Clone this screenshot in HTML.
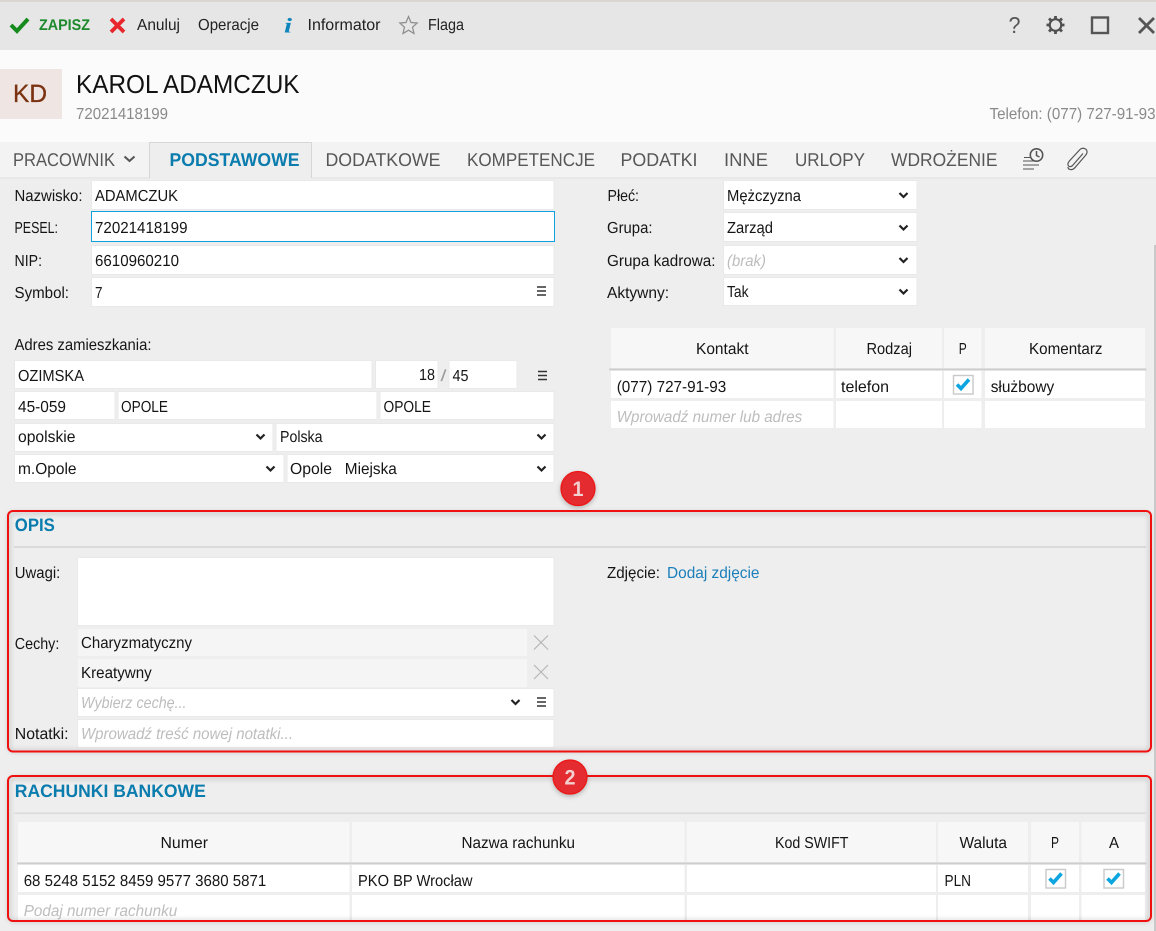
<!DOCTYPE html>
<html lang="pl">
<head>
<meta charset="utf-8">
<title>Karol Adamczuk</title>
<style>
html,body{margin:0;padding:0;background:#eee;overflow:hidden;width:1156px;height:931px}
svg{display:block}
text{font-family:"Liberation Sans",sans-serif;font-size:16px;fill:#151515;text-rendering:geometricPrecision}
.i{fill:#fff;stroke:#e9e9e9;stroke-width:1}
.h{fill:#f7f7f7}
.w{fill:#fff}
.ph{font-style:italic;fill:#bdbdbd}
.g{fill:#8a8a8a}
.t{font-size:18.5px;fill:#575757}
.s{font-size:18.5px;font-weight:bold;fill:#0a7cad}
.tb{fill:#222}
.c{fill:none;stroke:#222;stroke-width:2.2}
.m{stroke:#333;stroke-width:1.6}
.x{stroke:#b5b5b5;stroke-width:1.2}
.cb{fill:#fff;stroke:#c9c9c9;stroke-width:1.4}
.ck{fill:none;stroke:#0ca5df;stroke-width:3.6}
.f{fill:none;stroke:#f01010;stroke-width:2}
.fs{fill:none;stroke:#777;stroke-width:3;opacity:.32}
</style>
</head>
<body>
<svg xmlns="http://www.w3.org/2000/svg" width="1156" height="931" viewBox="0 0 1156 931">
<defs>
<filter id="b" x="-5%" y="-10%" width="110%" height="120%"><feGaussianBlur stdDeviation="2.5"/></filter>
<filter id="bs" x="-40%" y="-40%" width="180%" height="180%"><feGaussianBlur stdDeviation="2.5"/></filter>
<g id="chev"><path class="c" d="M-4-2L0 2L4-2"/></g>
<g id="menu"><path class="m" d="M-4.500-4H4.500M-4.500 0H4.500M-4.500 4H4.500"/></g>
<g id="xx"><path class="x" d="M-7-7L7 7M7-7L-7 7"/></g>
<g id="box"><rect class="cb" x="-9.500" y="-9" width="19.500" height="18.500"/><path class="ck" d="M-6 0L-2 4L6-5"/></g>
</defs>

<!-- page backgrounds -->
<rect width="1156" height="931" fill="#eee"/>
<rect width="1156" height="2" fill="#d9d5d1"/>
<rect y="2" width="1156" height="48" fill="#e6e6e6"/>
<rect y="50" width="1156" height="92" fill="#fbfbfb"/>
<rect y="142" width="1156" height="35" fill="#f3f3f3"/>
<rect y="177" width="1156" height="2" fill="#e8e8e8"/>
<rect x="1154" y="245" width="2" height="686" fill="#c9c9c9"/>

<!-- toolbar -->
<path d="M11 25L17 31L28 19" fill="none" stroke="#178a1e" stroke-width="4"/>
<text x="39" y="30" textLength="51" lengthAdjust="spacingAndGlyphs" font-weight="bold" style="font-size:15.5px;fill:#1c8a2c">ZAPISZ</text>
<path d="M111 19L124 32M124 19L111 32" stroke="#e8262c" stroke-width="3.800" fill="none"/>
<text class="tb" x="137" y="30" textLength="43" lengthAdjust="spacingAndGlyphs">Anuluj</text>
<text class="tb" x="198" y="30" textLength="61" lengthAdjust="spacingAndGlyphs">Operacje</text>
<text x="284" y="32.500" textLength="8" lengthAdjust="spacingAndGlyphs" font-weight="bold" font-style="italic" style="font-family:'Liberation Serif',serif;font-size:21px;fill:#0f85bd">i</text>
<text class="tb" x="307.500" y="30" textLength="73" lengthAdjust="spacingAndGlyphs">Informator</text>
<path d="M408.500 16.500L411 22.500L417.200 23L412.500 27.200L414 33.500L408.500 30.200L403 33.500L404.500 27.200L399.800 23L406 22.500Z" fill="none" stroke="#8c8c8c" stroke-width="1.200"/>
<text class="tb" x="428" y="30" textLength="36" lengthAdjust="spacingAndGlyphs">Flaga</text>

<text x="1008.500" y="33" textLength="12" lengthAdjust="spacingAndGlyphs" style="font-size:23px;fill:#555">?</text>
<g transform="translate(1055.500 25)" fill="none" stroke="#505050">
<circle r="5.800" stroke-width="2.200"/>
<path stroke-width="2.800" d="M0-9V-6.500M0 6.500V9M-9 0H-6.500M6.500 0H9M-6.500-6.500L-4.700-4.700M6.500-6.500L4.700-4.700M-6.500 6.500L-4.700 4.700M6.500 6.500L4.700 4.700"/>
</g>
<rect x="1092" y="17.500" width="16" height="15.500" fill="none" stroke="#555" stroke-width="2.400"/>
<path d="M1139 18L1154 33M1154 18L1139 33" fill="none" stroke="#555" stroke-width="2.800"/>

<!-- header -->
<rect y="69" width="62" height="50" fill="#efe6e4"/>
<text x="13" y="102" textLength="34" lengthAdjust="spacingAndGlyphs" style="font-size:25px;fill:#7b3312;stroke:#7b3312;stroke-width:.3">KD</text>
<text x="76" y="93" textLength="223.500" lengthAdjust="spacingAndGlyphs" style="font-size:26px;fill:#111">KAROL ADAMCZUK</text>
<text class="g" x="76" y="119" textLength="92" lengthAdjust="spacingAndGlyphs">72021418199</text>
<text class="g" x="989.500" y="119" textLength="166" lengthAdjust="spacingAndGlyphs">Telefon: (077) 727-91-93</text>

<!-- tabs -->
<rect x="150" y="142" width="162" height="37" fill="#eee"/>
<path d="M149.500 178V142.500H311.500V178" fill="none" stroke="#d6d6d6"/>
<text class="t" x="13" y="166" textLength="102" lengthAdjust="spacingAndGlyphs">PRACOWNIK</text>
<path d="M124.500 156.500L129.500 161L134.500 156.500" fill="none" stroke="#555" stroke-width="2"/>
<text class="s" x="169.500" y="166" textLength="130" lengthAdjust="spacingAndGlyphs">PODSTAWOWE</text>
<text class="t" x="325.500" y="166" textLength="115" lengthAdjust="spacingAndGlyphs">DODATKOWE</text>
<text class="t" x="467" y="166" textLength="128" lengthAdjust="spacingAndGlyphs">KOMPETENCJE</text>
<text class="t" x="620.500" y="166" textLength="77" lengthAdjust="spacingAndGlyphs">PODATKI</text>
<text class="t" x="724" y="166" textLength="44" lengthAdjust="spacingAndGlyphs">INNE</text>
<text class="t" x="795" y="166" textLength="70" lengthAdjust="spacingAndGlyphs">URLOPY</text>
<text class="t" x="891" y="166" textLength="106.500" lengthAdjust="spacingAndGlyphs">WDROŻENIE</text>
<g fill="none" stroke="#555">
<path stroke-width="1.100" d="M1024 157.500H1030M1023 161H1039M1023 165H1039M1023 169H1034"/>
<circle cx="1036.500" cy="155" r="6.200" stroke-width="1.600"/>
<path stroke-width="1.500" d="M1036.500 151V155.500L1039.500 157"/>
<path stroke-width="1.200" d="M1083 153.500L1073 165C1070.500 168 1067.500 166.500 1068 163.500C1068.200 162.500 1069 161.500 1069.800 160.500L1080 149.500C1082.500 147 1087.500 148.500 1087 152.500C1086.800 153.800 1086 155 1085 156L1075.500 167C1073 170.500 1068.500 170.500 1067.800 167"/>
</g>

<!-- left form -->
<text x="14.500" y="201" textLength="68" lengthAdjust="spacingAndGlyphs">Nazwisko:</text>
<text x="14.500" y="233" textLength="43.500" lengthAdjust="spacingAndGlyphs">PESEL:</text>
<text x="14.500" y="266" textLength="27.500" lengthAdjust="spacingAndGlyphs">NIP:</text>
<text x="14.500" y="298" textLength="54.500" lengthAdjust="spacingAndGlyphs">Symbol:</text>
<rect class="i" x="91.500" y="180.500" width="462.500" height="29"/>
<rect x="91.500" y="211.500" width="463" height="30" fill="#fff" stroke="#12a0dc"/>
<rect class="i" x="91.500" y="245.500" width="462.500" height="29"/>
<rect class="i" x="91.500" y="277.500" width="462.500" height="29"/>
<text x="95" y="201" textLength="83" lengthAdjust="spacingAndGlyphs">ADAMCZUK</text>
<text x="95" y="233" textLength="92.500" lengthAdjust="spacingAndGlyphs">72021418199</text>
<text x="95" y="266" textLength="84" lengthAdjust="spacingAndGlyphs">6610960210</text>
<text x="95" y="298" textLength="7.500" lengthAdjust="spacingAndGlyphs">7</text>
<use href="#menu" x="541.500" y="291"/>

<text x="14.500" y="350" textLength="137" lengthAdjust="spacingAndGlyphs">Adres zamieszkania:</text>
<rect class="i" x="14.500" y="360.500" width="357.500" height="28"/>
<rect class="i" x="375.500" y="360.500" width="62.500" height="28"/>
<rect class="i" x="449" y="360.500" width="68" height="28"/>
<text x="18" y="381" textLength="66" lengthAdjust="spacingAndGlyphs">OZIMSKA</text>
<text x="419" y="380" textLength="16" lengthAdjust="spacingAndGlyphs">18</text>
<text x="440.500" y="381" textLength="6" lengthAdjust="spacingAndGlyphs" style="fill:#999">/</text>
<text x="452.500" y="381" textLength="16" lengthAdjust="spacingAndGlyphs">45</text>
<use href="#menu" x="542.500" y="375.500"/>
<rect class="i" x="14.500" y="391.500" width="100.500" height="28"/>
<rect class="i" x="118" y="391.500" width="259" height="28"/>
<rect class="i" x="380" y="391.500" width="174" height="28"/>
<text x="18" y="412" textLength="48" lengthAdjust="spacingAndGlyphs">45-059</text>
<text x="121" y="412" textLength="47" lengthAdjust="spacingAndGlyphs">OPOLE</text>
<text x="383.500" y="412" textLength="47.500" lengthAdjust="spacingAndGlyphs">OPOLE</text>
<rect class="i" x="14.500" y="423.500" width="258.500" height="28"/>
<rect class="i" x="276" y="423.500" width="278" height="28"/>
<text x="18" y="442" textLength="57.500" lengthAdjust="spacingAndGlyphs">opolskie</text>
<text x="280" y="442" textLength="42.500" lengthAdjust="spacingAndGlyphs">Polska</text>
<use href="#chev" x="260.500" y="436.500"/>
<use href="#chev" x="541.500" y="436.500"/>
<rect class="i" x="14.500" y="454.500" width="269.500" height="28"/>
<rect class="i" x="287" y="454.500" width="267" height="28"/>
<text x="18" y="474" textLength="58.500" lengthAdjust="spacingAndGlyphs">m.Opole</text>
<text x="290" y="474" textLength="42" lengthAdjust="spacingAndGlyphs">Opole</text>
<text x="344.800" y="474" textLength="52" lengthAdjust="spacingAndGlyphs">Miejska</text>
<use href="#chev" x="270.500" y="468.500"/>
<use href="#chev" x="541.500" y="468.500"/>

<!-- right form -->
<text x="607.500" y="201" textLength="31.500" lengthAdjust="spacingAndGlyphs">Płeć:</text>
<text x="607" y="233" textLength="45.500" lengthAdjust="spacingAndGlyphs">Grupa:</text>
<text x="607" y="266" textLength="108.500" lengthAdjust="spacingAndGlyphs">Grupa kadrowa:</text>
<text x="607" y="298" textLength="62" lengthAdjust="spacingAndGlyphs">Aktywny:</text>
<rect class="i" x="723.500" y="180.500" width="193.500" height="29"/>
<rect class="i" x="723.500" y="212.500" width="193.500" height="29"/>
<rect class="i" x="723.500" y="245.500" width="193.500" height="29"/>
<rect class="i" x="723.500" y="277.500" width="193.500" height="28"/>
<text x="727" y="201" textLength="74" lengthAdjust="spacingAndGlyphs">Mężczyzna</text>
<text x="727" y="233" textLength="46" lengthAdjust="spacingAndGlyphs">Zarząd</text>
<text class="ph" x="727" y="266" textLength="39" lengthAdjust="spacingAndGlyphs">(brak)</text>
<text x="727" y="297" textLength="21.500" lengthAdjust="spacingAndGlyphs">Tak</text>
<use href="#chev" x="903.500" y="195"/>
<use href="#chev" x="903.500" y="227.500"/>
<use href="#chev" x="903.500" y="260"/>
<use href="#chev" x="903.500" y="291.500"/>

<!-- contacts table -->
<rect class="h" x="611" y="328" width="222.500" height="40"/>
<rect class="h" x="836" y="328" width="106" height="40"/>
<rect class="h" x="944" y="328" width="37.500" height="40"/>
<rect class="h" x="985" y="328" width="160" height="40"/>
<rect x="609" y="368.500" width="537.500" height="1.800" fill="#cdcdcd"/>
<rect class="w" x="611" y="371" width="222.500" height="27"/>
<rect class="w" x="836" y="371" width="106" height="27"/>
<rect class="w" x="944" y="371" width="37.500" height="27"/>
<rect class="w" x="985" y="371" width="160" height="27"/>
<rect class="w" x="611" y="401" width="222.500" height="27"/>
<rect class="w" x="836" y="401" width="106" height="27"/>
<rect class="w" x="944" y="401" width="37.500" height="27"/>
<rect class="w" x="985" y="401" width="160" height="27"/>
<text x="696" y="354" textLength="52.500" lengthAdjust="spacingAndGlyphs">Kontakt</text>
<text x="866.500" y="354" textLength="45.500" lengthAdjust="spacingAndGlyphs">Rodzaj</text>
<text x="958.800" y="354" textLength="8" lengthAdjust="spacingAndGlyphs">P</text>
<text x="1029" y="354" textLength="73.500" lengthAdjust="spacingAndGlyphs">Komentarz</text>
<text x="616.700" y="392" textLength="109.500" lengthAdjust="spacingAndGlyphs">(077) 727-91-93</text>
<text x="841" y="392" textLength="48" lengthAdjust="spacingAndGlyphs">telefon</text>
<use href="#box" x="963" y="384.500"/>
<text x="990.700" y="392" textLength="63.500" lengthAdjust="spacingAndGlyphs">służbowy</text>
<text class="ph" x="616.700" y="422" textLength="185.500" lengthAdjust="spacingAndGlyphs">Wprowadź numer lub adres</text>

<!-- OPIS -->
<text x="14.800" y="531" textLength="40" lengthAdjust="spacingAndGlyphs" font-weight="bold" style="font-size:18px;fill:#0a7cad">OPIS</text>
<rect x="14" y="546" width="1132" height="2" fill="#dadada"/>
<text x="14.800" y="578" textLength="45.500" lengthAdjust="spacingAndGlyphs">Uwagi:</text>
<rect class="i" x="77.500" y="557.500" width="476.500" height="68"/>
<text x="14.800" y="649" textLength="44.500" lengthAdjust="spacingAndGlyphs">Cechy:</text>
<rect x="78" y="629" width="449" height="27" fill="#f5f5f5"/>
<rect x="78" y="659" width="449" height="28" fill="#f5f5f5"/>
<text x="81" y="648" textLength="111" lengthAdjust="spacingAndGlyphs">Charyzmatyczny</text>
<text x="81" y="678" textLength="70.700" lengthAdjust="spacingAndGlyphs">Kreatywny</text>
<use href="#xx" x="541" y="642.500"/>
<use href="#xx" x="541" y="672"/>
<rect class="i" x="77.500" y="688.500" width="476.500" height="28"/>
<text class="ph" x="81" y="708" textLength="105.500" lengthAdjust="spacingAndGlyphs">Wybierz cechę...</text>
<use href="#chev" x="515.500" y="702"/>
<use href="#menu" x="541.500" y="702"/>
<text x="14.800" y="739" textLength="53.700" lengthAdjust="spacingAndGlyphs">Notatki:</text>
<rect class="i" x="77.500" y="719.500" width="476.500" height="28"/>
<text class="ph" x="81" y="739" textLength="212" lengthAdjust="spacingAndGlyphs">Wprowadź treść nowej notatki...</text>
<text x="607" y="578" textLength="53" lengthAdjust="spacingAndGlyphs">Zdjęcie:</text>
<text x="667" y="578" textLength="92.500" lengthAdjust="spacingAndGlyphs" style="fill:#1b7fba">Dodaj zdjęcie</text>

<!-- RACHUNKI -->
<text x="14.800" y="797" textLength="191" lengthAdjust="spacingAndGlyphs" font-weight="bold" style="font-size:18px;fill:#0a7cad">RACHUNKI BANKOWE</text>
<rect x="14" y="812.500" width="1132" height="1.500" fill="#dadada"/>
<rect class="h" x="18" y="822" width="331.500" height="40"/>
<rect class="h" x="352" y="822" width="332.500" height="40"/>
<rect class="h" x="687" y="822" width="249" height="40"/>
<rect class="h" x="938" y="822" width="90" height="40"/>
<rect class="h" x="1031" y="822" width="48" height="40"/>
<rect class="h" x="1081.500" y="822" width="63.500" height="40"/>
<rect x="17" y="862.500" width="1129.500" height="1.800" fill="#cdcdcd"/>
<rect class="w" x="18" y="865" width="331.500" height="27"/>
<rect class="w" x="352" y="865" width="332.500" height="27"/>
<rect class="w" x="687" y="865" width="249" height="27"/>
<rect class="w" x="938" y="865" width="90" height="27"/>
<rect class="w" x="1031" y="865" width="48" height="27"/>
<rect class="w" x="1081.500" y="865" width="63.500" height="27"/>
<rect class="w" x="18" y="895" width="331.500" height="26"/>
<rect class="w" x="352" y="895" width="332.500" height="26"/>
<rect class="w" x="687" y="895" width="249" height="26"/>
<rect class="w" x="938" y="895" width="90" height="26"/>
<rect class="w" x="1031" y="895" width="48" height="26"/>
<rect class="w" x="1081.500" y="895" width="63.500" height="26"/>
<text x="160.500" y="848" textLength="47.500" lengthAdjust="spacingAndGlyphs">Numer</text>
<text x="461.500" y="848" textLength="113.500" lengthAdjust="spacingAndGlyphs">Nazwa rachunku</text>
<text x="775" y="848" textLength="73.500" lengthAdjust="spacingAndGlyphs">Kod SWIFT</text>
<text x="959.500" y="848" textLength="47.500" lengthAdjust="spacingAndGlyphs">Waluta</text>
<text x="1051" y="848" textLength="8" lengthAdjust="spacingAndGlyphs">P</text>
<text x="1109" y="848" textLength="10" lengthAdjust="spacingAndGlyphs">A</text>
<text x="23.700" y="886" textLength="242.500" lengthAdjust="spacingAndGlyphs">68 5248 5152 8459 9577 3680 5871</text>
<text x="358" y="886" textLength="114.500" lengthAdjust="spacingAndGlyphs">PKO BP Wrocław</text>
<text x="944.500" y="886" textLength="26.500" lengthAdjust="spacingAndGlyphs">PLN</text>
<use href="#box" x="1055.500" y="878.500"/>
<use href="#box" x="1113.500" y="878.500"/>
<text class="ph" x="23.700" y="916" textLength="153.500" lengthAdjust="spacingAndGlyphs">Podaj numer rachunku</text>

<!-- red frames -->
<rect class="fs" x="9" y="513" width="1141" height="238" rx="5" filter="url(#b)"/>
<rect class="f" x="8" y="511" width="1143" height="240.500" rx="5"/>
<rect class="fs" x="9" y="778" width="1141" height="143" rx="5" filter="url(#b)"/>
<rect class="f" x="8" y="776" width="1143" height="145" rx="5"/>

<!-- badges -->
<circle cx="578" cy="490.500" r="17.500" fill="#555" opacity=".4" filter="url(#bs)"/>
<circle cx="578" cy="488.500" r="17" fill="#e32b30" stroke="#f01414" stroke-width="1.200"/>
<text x="572.500" y="496" textLength="11" lengthAdjust="spacingAndGlyphs" font-weight="bold" style="font-size:21px;fill:#f3d0d0">1</text>
<circle cx="570" cy="779" r="17.500" fill="#555" opacity=".4" filter="url(#bs)"/>
<circle cx="570" cy="777" r="17" fill="#e32b30" stroke="#f01414" stroke-width="1.200"/>
<text x="564.500" y="784.500" textLength="11" lengthAdjust="spacingAndGlyphs" font-weight="bold" style="font-size:21px;fill:#f3d0d0">2</text>
</svg>
</body>
</html>
